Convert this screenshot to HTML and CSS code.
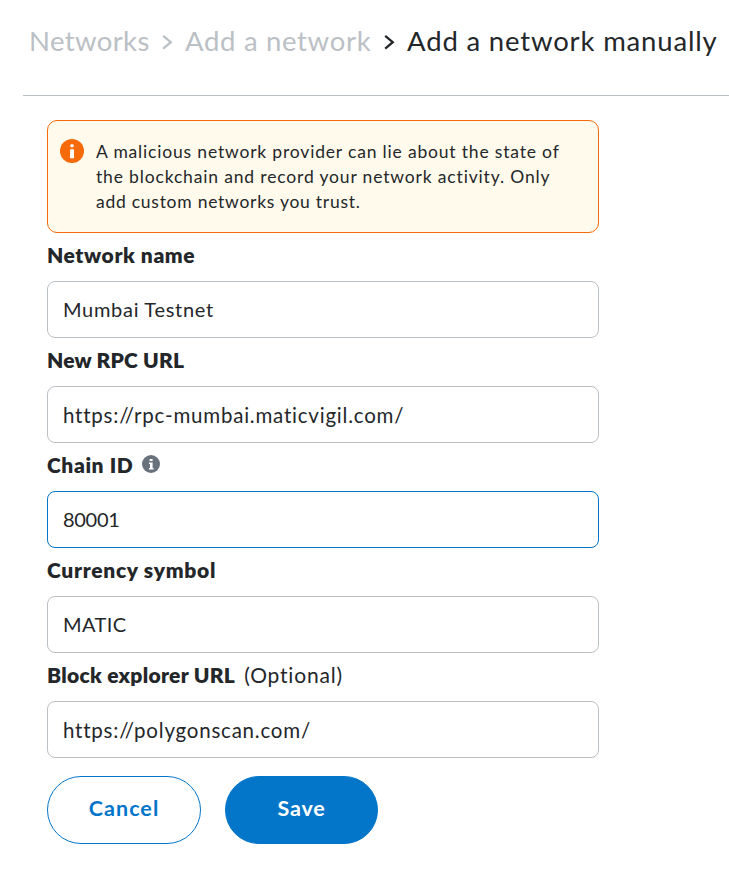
FILE: index.html
```html
<!DOCTYPE html>
<html lang="en">
<head>
<meta charset="utf-8">
<title>Add a network manually</title>
<link rel="stylesheet" href="styles.css">
</head>
<body>
<header class="breadcrumbs">
  <span class="crumb crumb-networks">Networks</span>
  <svg class="chevron" viewBox="0 0 12 16"><path d="M1.2 1.8 8.8 8.2l-7.6 6.4"/></svg>
  <span class="crumb crumb-add">Add a network</span>
  <svg class="chevron chevron-active" viewBox="0 0 12 16"><path d="M1.2 1.8 8.8 8.2l-7.6 6.4"/></svg>
  <span class="crumb crumb-current">Add a network manually</span>
</header>
<main class="form">
  <div class="alert">
    <svg class="alert-icon" viewBox="0 0 24 24"><circle cx="12" cy="12" r="12" fill="#f66a0a"/><circle cx="12" cy="6.7" r="1.8" fill="#fff"/><path d="M10.1 10.3h3.9v9h-3.9z" fill="#fff"/></svg>
    <p class="alert-text"><span class="l1">A malicious network provider can lie about the state of</span><br><span class="l2">the blockchain and record your network activity. Only</span><br><span class="l3">add custom networks you trust.</span></p>
  </div>
  <label class="field"><span class="label"><b class="t-name">Network name</b></span><span class="input v-name">Mumbai Testnet</span></label>
  <label class="field"><span class="label"><b class="t-rpc">New RPC URL</b></span><span class="input v-url">https://rpc-mumbai.maticvigil.com/</span></label>
  <label class="field"><span class="label"><b class="t-chain">Chain ID</b><svg class="info" viewBox="0 0 18 18"><circle cx="9" cy="9" r="9" fill="#6a737d"/><path d="M7.6 3.9h3v2.2h-3zM7 7.5h3.6v5.4h.9v1.6H7v-1.6h1V9.1H7z" fill="#fff"/></svg></span><span class="input focused v-chain">80001</span></label>
  <label class="field"><span class="label"><b class="t-symbol">Currency symbol</b></span><span class="input">MATIC</span></label>
  <label class="field"><span class="label"><b class="t-block">Block explorer URL</b><span class="optional">(Optional)</span></span><span class="input v-url">https://polygonscan.com/</span></label>
  <div class="actions">
    <button class="button cancel">Cancel</button>
    <button class="button save">Save</button>
  </div>
</main>
</body>
</html>
```
FILE: styles.css
```css
* { box-sizing: border-box; }
body { margin: 0; background: #fff; color: #24272a; font-family: Lato, "Liberation Sans", sans-serif; font-size: 20px; }
.breadcrumbs { display: flex; align-items: center; height: 96px; margin-left: 23px; padding: 0 0 14px 6px; border-bottom: 1px solid #bbc0c5; font-size: 27.5px; white-space: nowrap; color: #bbc0c5; }
.crumb { line-height: 34px; }
.crumb-networks { width: 120px; letter-spacing: .37px; }
.crumb-add { width: 186px; letter-spacing: .68px; }
.crumb-current { color: #24272a; letter-spacing: .83px; }
.chevron { width: 12px; height: 16px; flex: none; margin: 3px 11px 0 13px; fill: none; stroke: #bbc0c5; stroke-width: 2.3; }
.chevron-active { stroke: #24272a; }
.form { width: 552px; margin: 24px 0 0 47px; }
.alert { display: flex; height: 113px; padding: 18px 12px; border: 1px solid #f66a0a; border-radius: 10px; background: #fffaeb; }
.alert-icon { width: 24px; height: 24px; margin-right: 12px; flex: none; }
.alert-text { margin: 0; font-size: 17.5px; line-height: 25px; white-space: nowrap; }
.l1 { letter-spacing: .82px; }
.l2 { letter-spacing: .84px; }
.l3 { letter-spacing: .74px; }
.field { display: block; }
.label { display: flex; align-items: center; height: 48px; padding-bottom: 6px; white-space: nowrap; font-size: 21px; }
.label b { font-weight: 800; }
.t-name { letter-spacing: .6px; }
.t-rpc { letter-spacing: .2px; }
.t-chain { letter-spacing: .6px; }
.t-symbol { letter-spacing: .7px; }
.t-block { letter-spacing: .3px; }
.info { width: 18px; height: 18px; margin: 0 0 0 9px; }
.optional { margin-left: 9px; letter-spacing: .8px; }
.input { display: flex; align-items: center; height: 57px; padding: 0 15px 1px; border: 1px solid #bbc0c5; border-radius: 8px; letter-spacing: .4px; }
.v-name { letter-spacing: .7px; }
.v-url { padding: 1px 15px 0; font-size: 20.5px; letter-spacing: .78px; }
.v-chain { letter-spacing: -.3px; }
.focused { border-color: #0376c9; }
.actions { display: flex; gap: 24px; margin-top: 18px; }
.button { height: 68px; width: 154px; padding: 0 0 5px; border: 1px solid #0376c9; border-radius: 34px; background: #fff; color: #0376c9; font: 700 21.5px Lato, sans-serif; letter-spacing: 1.05px; }
.save { width: 153px; background: #0376c9; color: #fff; letter-spacing: .8px; }
```
